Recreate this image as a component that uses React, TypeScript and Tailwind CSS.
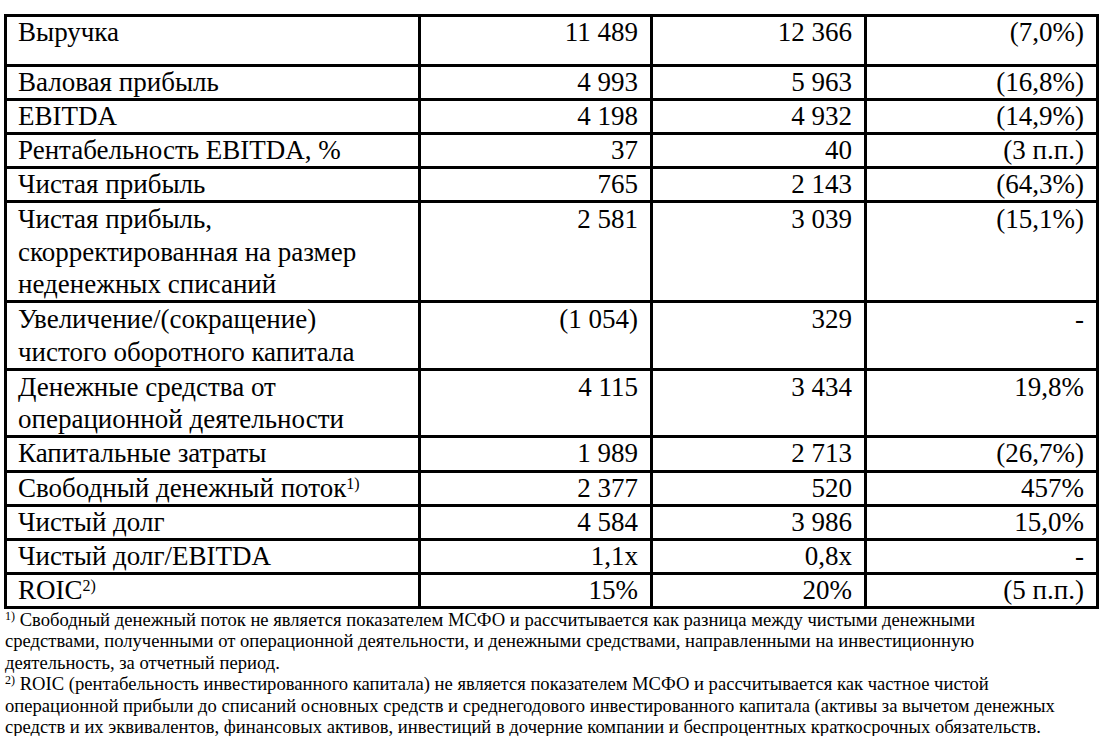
type Row = {
  label: string[];
  note?: string;
  a: string;
  b: string;
  c: string;
  tall?: boolean;
};

const rows: Row[] = [
  { label: ["Выручка"], a: "11 489", b: "12 366", c: "(7,0%)", tall: true },
  { label: ["Валовая прибыль"], a: "4 993", b: "5 963", c: "(16,8%)" },
  { label: ["EBITDA"], a: "4 198", b: "4 932", c: "(14,9%)" },
  { label: ["Рентабельность EBITDA, %"], a: "37", b: "40", c: "(3 п.п.)" },
  { label: ["Чистая прибыль"], a: "765", b: "2 143", c: "(64,3%)" },
  {
    label: ["Чистая прибыль,", "скорректированная на размер", "неденежных списаний"],
    a: "2 581",
    b: "3 039",
    c: "(15,1%)",
  },
  { label: ["Увеличение/(сокращение)", "чистого оборотного капитала"], a: "(1 054)", b: "329", c: "-" },
  { label: ["Денежные средства от", "операционной деятельности"], a: "4 115", b: "3 434", c: "19,8%" },
  { label: ["Капитальные затраты"], a: "1 989", b: "2 713", c: "(26,7%)" },
  { label: ["Свободный денежный поток"], note: "1)", a: "2 377", b: "520", c: "457%" },
  { label: ["Чистый долг"], a: "4 584", b: "3 986", c: "15,0%" },
  { label: ["Чистый долг/EBITDA"], a: "1,1x", b: "0,8x", c: "-" },
  { label: ["ROIC"], note: "2)", a: "15%", b: "20%", c: "(5 п.п.)" },
];

const footnotes: { mark?: string; text: string }[] = [
  {
    mark: "1)",
    text: " Свободный денежный поток не является показателем МСФО и рассчитывается как разница между чистыми денежными",
  },
  { text: "средствами, полученными от операционной деятельности, и денежными средствами, направленными на инвестиционную" },
  { text: "деятельность, за отчетный период." },
  {
    mark: "2)",
    text: " ROIC (рентабельность инвестированного капитала) не является показателем МСФО и рассчитывается как частное чистой",
  },
  {
    text: "операционной прибыли до списаний основных средств и среднегодового инвестированного капитала (активы за вычетом денежных",
  },
  { text: "средств и их эквивалентов, финансовых активов, инвестиций в дочерние компании и беспроцентных краткосрочных обязательств." },
];

const cell = "border-[3px] border-black align-top whitespace-nowrap";

export default function App() {
  return (
    <div className="min-h-screen bg-white text-black font-['Liberation_Serif','Times_New_Roman',serif]">
      <div className="pt-[14px] pl-[4px]">
        <table className="table-fixed border-collapse w-[1095px] text-[27px]">
          <colgroup>
            <col className="w-[414px]" />
            <col className="w-[232px]" />
            <col className="w-[214px]" />
            <col className="w-[232px]" />
          </colgroup>
          <tbody>
            {rows.map((r, i) => {
              const lh = r.label.length > 1 ? "leading-[32.3px]" : "leading-[31.1px]";
              return (
                <tr key={i} className={lh}>
                  <td className={`${cell} pl-[11px] pr-2 ${r.tall ? "h-[50px]" : ""}`}>
                    {r.label.map((line, j) => (
                      <div key={j}>
                        {line}
                        {r.note && j === r.label.length - 1 && (
                          <sup className="text-[16px]">{r.note}</sup>
                        )}
                      </div>
                    ))}
                  </td>
                  <td className={`${cell} text-right pr-[12px]`}>{r.a}</td>
                  <td className={`${cell} text-right pr-[12px]`}>{r.b}</td>
                  <td className={`${cell} text-right pr-[12px]`}>{r.c}</td>
                </tr>
              );
            })}
          </tbody>
        </table>
        <div className="pl-px text-[18.6px] leading-[21.4px]">
          {footnotes.map((f, i) => (
            <div key={i} className="whitespace-nowrap">
              {f.mark && <sup className="text-[12px]">{f.mark}</sup>}
              {f.text}
            </div>
          ))}
        </div>
      </div>
    </div>
  );
}
